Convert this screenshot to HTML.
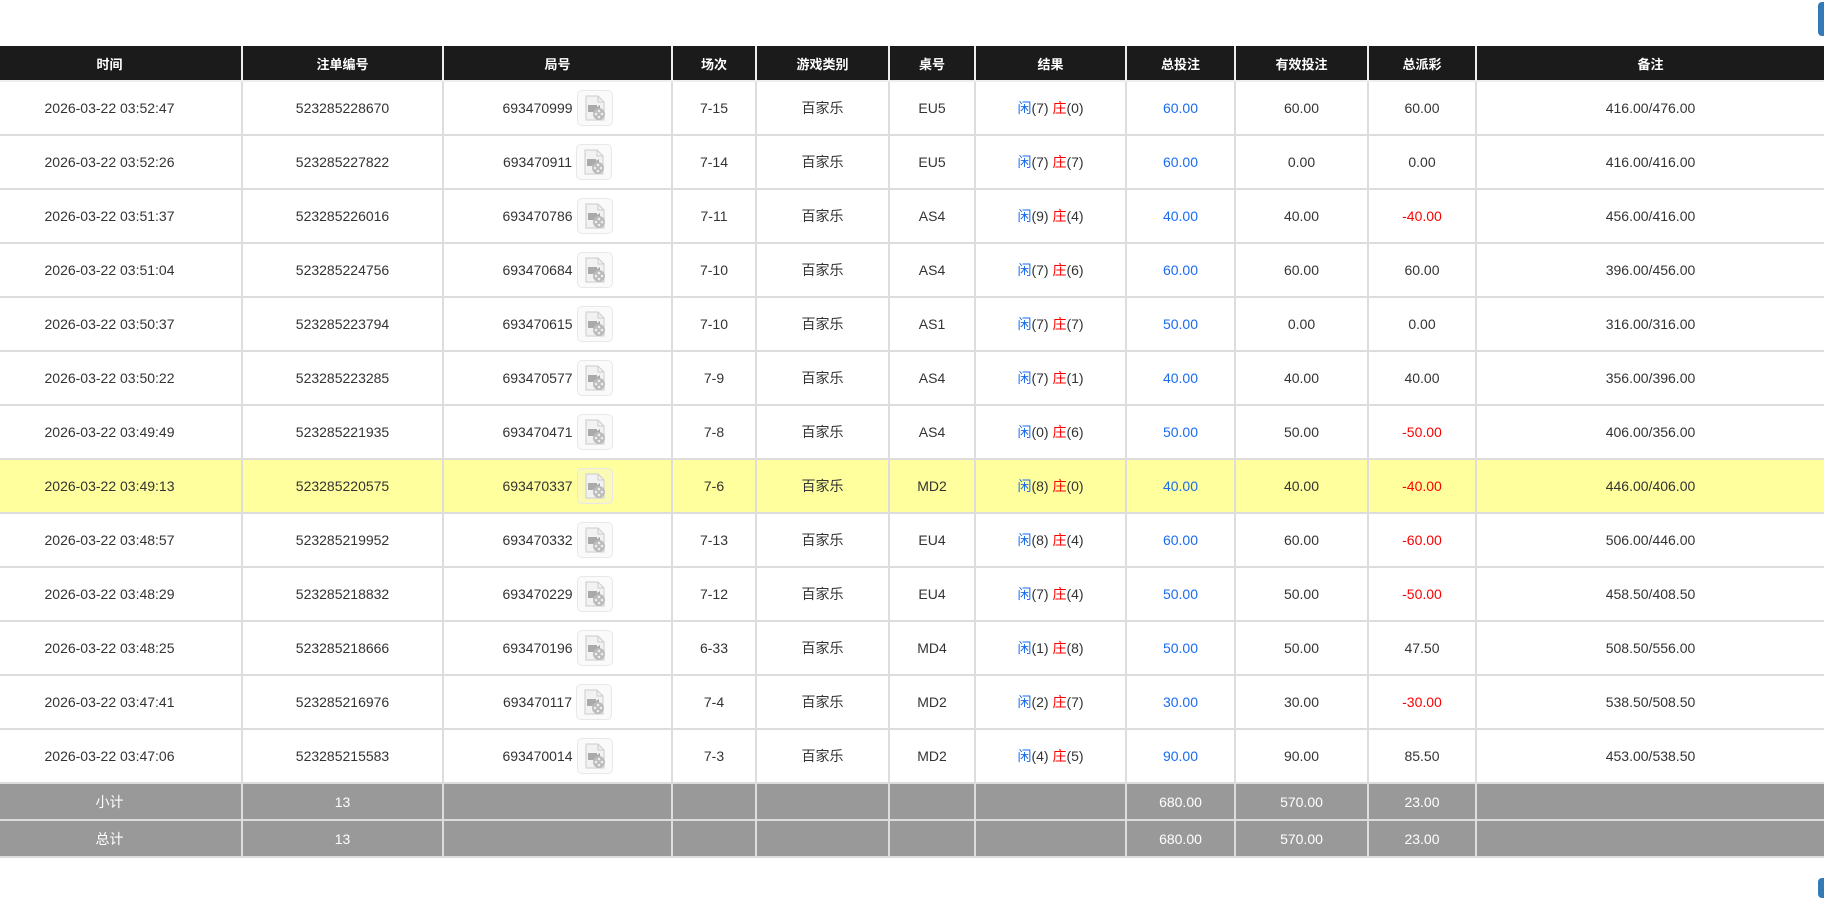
<!DOCTYPE html>
<html><head><meta charset="utf-8"><style>
body{margin:0;background:#fff;width:1824px;height:890px;overflow:hidden;font-family:"Liberation Sans","Noto Sans CJK SC",sans-serif;font-size:14px;color:#333;position:relative}
table{position:absolute;top:46px;left:0;width:1824px;border-collapse:collapse;table-layout:fixed}
td,th{border:2px solid #ddd;text-align:center;padding:0;white-space:nowrap;vertical-align:middle}
tr>*:first-child{border-left:0;padding-right:22px}tr>*:last-child{border-right:0}
th{background:#1b1b1b;color:#fff;font-weight:bold;font-size:13px;height:34px;border-color:#eee;border-top:0}
tbody td{height:52px}
tr.hl td{background:#ffff9d}
tr.s td{background:#999;color:#fff;height:35px;border-color:#ddd}
.b{color:#1a6cf0}.r{color:#f00}
.ic{display:inline-block;width:34px;height:34px;border:1px solid #e8e8e8;border-radius:5px;vertical-align:middle;margin-left:4px;background:rgba(240,240,240,.3)}
.ic svg{display:block}
.btn{position:absolute;right:0;width:6px;background:#337ab7;border-radius:4px 0 0 4px}
</style></head><body>
<div class="btn" style="top:2px;height:34px"></div>
<div class="btn" style="top:878px;height:20px"></div>
<table>
<colgroup><col style="width:242px"><col style="width:201px"><col style="width:229px"><col style="width:84px"><col style="width:133px"><col style="width:86px"><col style="width:151px"><col style="width:109px"><col style="width:133px"><col style="width:108px"><col style="width:348px"></colgroup>
<thead><tr><th>时间</th><th>注单编号</th><th>局号</th><th>场次</th><th>游戏类别</th><th>桌号</th><th>结果</th><th>总投注</th><th>有效投注</th><th>总派彩</th><th>备注</th></tr></thead>
<tbody id="tb"></tbody></table>
<script>
var d=[
["03:52:47","523285228670","693470999","7-15","EU5",7,0,"60.00","60.00","60.00","416.00/476.00"],
["03:52:26","523285227822","693470911","7-14","EU5",7,7,"60.00","0.00","0.00","416.00/416.00"],
["03:51:37","523285226016","693470786","7-11","AS4",9,4,"40.00","40.00","-40.00","456.00/416.00"],
["03:51:04","523285224756","693470684","7-10","AS4",7,6,"60.00","60.00","60.00","396.00/456.00"],
["03:50:37","523285223794","693470615","7-10","AS1",7,7,"50.00","0.00","0.00","316.00/316.00"],
["03:50:22","523285223285","693470577","7-9","AS4",7,1,"40.00","40.00","40.00","356.00/396.00"],
["03:49:49","523285221935","693470471","7-8","AS4",0,6,"50.00","50.00","-50.00","406.00/356.00"],
["03:49:13","523285220575","693470337","7-6","MD2",8,0,"40.00","40.00","-40.00","446.00/406.00"],
["03:48:57","523285219952","693470332","7-13","EU4",8,4,"60.00","60.00","-60.00","506.00/446.00"],
["03:48:29","523285218832","693470229","7-12","EU4",7,4,"50.00","50.00","-50.00","458.50/408.50"],
["03:48:25","523285218666","693470196","6-33","MD4",1,8,"50.00","50.00","47.50","508.50/556.00"],
["03:47:41","523285216976","693470117","7-4","MD2",2,7,"30.00","30.00","-30.00","538.50/508.50"],
["03:47:06","523285215583","693470014","7-3","MD2",4,5,"90.00","90.00","85.50","453.00/538.50"]];
var ic='<span class="ic"><svg width="34" height="34" viewBox="0 0 34 34"><path d="M8 5h12l6 6v18H8z" fill="#f2f2f2" stroke="#ccc"/><path d="M20 5v6h6" fill="none" stroke="#ccc"/><rect x="10" y="14" width="9" height="7" fill="#aaa"/><path d="M19 16l3-2v7l-3-2z" fill="#aaa"/><circle cx="21" cy="23" r="6" fill="#bbb"/><circle cx="21" cy="20" r="1.3" fill="#eee"/><circle cx="18" cy="23" r="1.3" fill="#eee"/><circle cx="24" cy="23" r="1.3" fill="#eee"/><circle cx="21" cy="26" r="1.3" fill="#eee"/></svg></span>';
var h='';
d.forEach(function(r,i){h+='<tr'+(i==7?' class="hl"':'')+'><td>2026-03-22 '+r[0]+'</td><td>'+r[1]+'</td><td><span style="vertical-align:middle">'+r[2]+'</span>'+ic+'</td><td>'+r[3]+'</td><td>百家乐</td><td>'+r[4]+'</td><td><span class="b">闲</span>('+r[5]+') <span class="r">庄</span>('+r[6]+')</td><td class="b">'+r[7]+'</td><td>'+r[8]+'</td><td'+(r[9][0]=='-'?' class="r"':'')+'>'+r[9]+'</td><td>'+r[10]+'</td></tr>';});
['小计','总计'].forEach(function(n){h+='<tr class="s"><td>'+n+'</td><td>13</td><td></td><td></td><td></td><td></td><td></td><td>680.00</td><td>570.00</td><td>23.00</td><td></td></tr>';});
document.getElementById('tb').innerHTML=h;
</script>
</body></html>
